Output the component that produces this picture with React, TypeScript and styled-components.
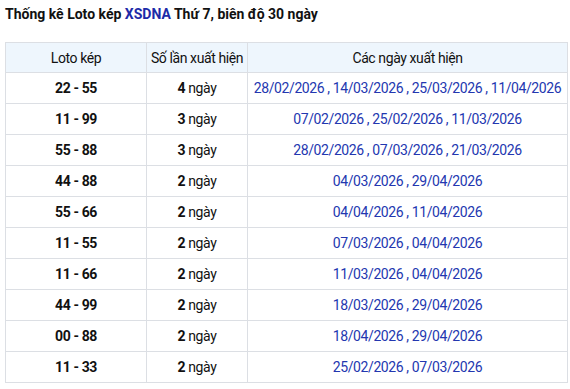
import React from 'react';
import styled, { createGlobalStyle } from 'styled-components';

const GlobalStyle = createGlobalStyle`
  html, body {
    margin: 0;
    padding: 0;
    background: #fff;
  }
  body {
    font-family: Roboto, "Liberation Sans", Arial, sans-serif;
    color: #111;
  }
`;

const Page = styled.div`
  padding: 5px 3px 0 5px;
  width: 570px;
  box-sizing: border-box;
`;

const Title = styled.h2`
  margin: 0 0 19px;
  font-size: 14px;
  font-weight: bold;
  line-height: 18px;
  color: #111;
`;

const Brand = styled.span`
  color: #1c2aa8;
`;

const Table = styled.table`
  width: 563px;
  border-collapse: collapse;
  table-layout: fixed;
  font-size: 14px;
  letter-spacing: -0.4px;
`;

const Head = styled.th`
  height: 29px;
  padding: 0;
  font-weight: normal;
  background: #eef6fd;
  border: 1px solid #dcdfe4;
  text-align: center;
  white-space: nowrap;
`;

const Cell = styled.td<{ $col?: 'pair' | 'count' | 'dates' }>`
  height: 30px;
  padding: 0;
  border: 1px solid #dcdfe4;
  text-align: center;
  white-space: nowrap;
  font-weight: ${(p) => (p.$col === 'pair' ? 'bold' : 'normal')};
  color: ${(p) => (p.$col === 'dates' ? '#2337b0' : '#111')};
`;

const Count = styled.b`
  font-weight: bold;
`;

const rows: [string, number, string[]][] = [
  ['22 - 55', 4, ['28/02/2026', '14/03/2026', '25/03/2026', '11/04/2026']],
  ['11 - 99', 3, ['07/02/2026', '25/02/2026', '11/03/2026']],
  ['55 - 88', 3, ['28/02/2026', '07/03/2026', '21/03/2026']],
  ['44 - 88', 2, ['04/03/2026', '29/04/2026']],
  ['55 - 66', 2, ['04/04/2026', '11/04/2026']],
  ['11 - 55', 2, ['07/03/2026', '04/04/2026']],
  ['11 - 66', 2, ['11/03/2026', '04/04/2026']],
  ['44 - 99', 2, ['18/03/2026', '29/04/2026']],
  ['00 - 88', 2, ['18/04/2026', '29/04/2026']],
  ['11 - 33', 2, ['25/02/2026', '07/03/2026']],
];

export default function App() {
  return (
    <Page>
      <GlobalStyle />
      <Title>
        Thống kê Loto kép <Brand>XSDNA</Brand> Thứ 7, biên độ 30 ngày
      </Title>
      <Table>
        <colgroup>
          <col style={{ width: 141 }} />
          <col style={{ width: 101 }} />
          <col />
        </colgroup>
        <thead>
          <tr>
            <Head>Loto kép</Head>
            <Head>Số lần xuất hiện</Head>
            <Head>Các ngày xuất hiện</Head>
          </tr>
        </thead>
        <tbody>
          {rows.map(([pair, count, dates]) => (
            <tr key={pair}>
              <Cell $col="pair">{pair}</Cell>
              <Cell $col="count">
                <Count>{count}</Count> ngày
              </Cell>
              <Cell $col="dates">{dates.join(' , ')}</Cell>
            </tr>
          ))}
        </tbody>
      </Table>
    </Page>
  );
}
